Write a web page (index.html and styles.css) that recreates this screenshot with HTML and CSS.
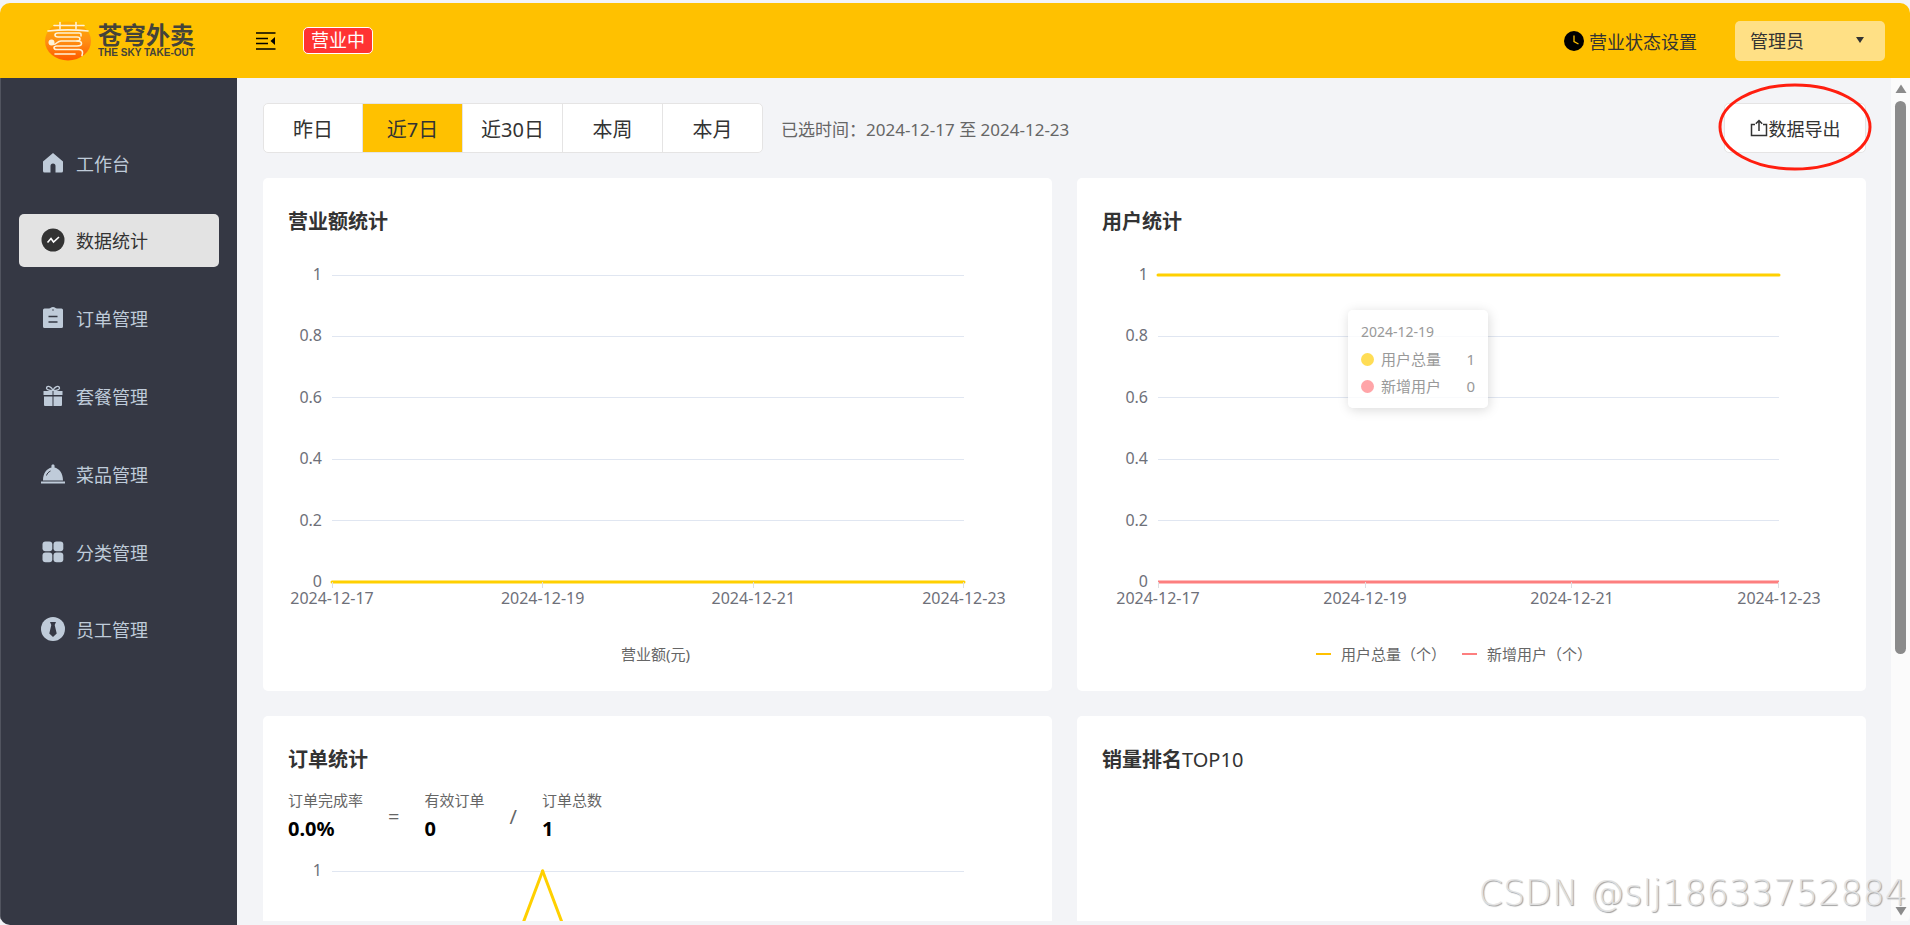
FILE: index.html
```
<!DOCTYPE html>
<html lang="zh-CN">
<head>
    <meta charset="UTF-8">
    <meta name="viewport" content="width=device-width, initial-scale=1.0">
    <title>苍穹外卖</title>
    <link rel="stylesheet" href="styles.css">
</head>
<body>
    <div class="app">
        <header class="navbar">
            <a class="logo" href="#">
                <svg class="logo-mark" viewBox="0 0 46 40">
                    <defs>
                        <linearGradient id="sun" x1="0" y1="0" x2="0" y2="1">
                            <stop offset="0" stop-color="#ffb000"/>
                            <stop offset="0.5" stop-color="#ff8f12"/>
                            <stop offset="1" stop-color="#ff5a00"/>
                        </linearGradient>
                    </defs>
                    <ellipse cx="23" cy="20" rx="23" ry="19.500" fill="url(#sun)"/>
                    <g fill="none" stroke="#fff3d6" stroke-width="1.600" stroke-linecap="round" stroke-linejoin="round">
                        <path d="M9 4.500h30M15 1.500v6M31 1.500v6M3 10c13-1.500 27-1.500 40 0"/>
                        <path d="M36 15V13.500c0-1-1-1.500-2-1.500H13c-4 0-4 4 0 4h19c4 0 4 4 0 4H16c-4 0-4 3.500-8 3.500"/>
                        <path d="M32 20c6 0 6 5 0 5H12c-4 0-4 3.500 0 3.500h22c4 0 4 3.500 3 6M10 33h20"/>
                    </g>
                    <circle cx="6.500" cy="21.500" r="3" fill="#fff3d6"/>
                </svg>
                <span class="logo-text">
                    <span class="logo-cn">苍穹外卖</span>
                    <span class="logo-en">THE SKY TAKE-OUT</span>
                </span>
            </a>
            <button class="icon-btn" type="button" aria-label="收起菜单">
                <svg width="20" height="18" viewBox="0 0 20 18">
                    <path d="M0 1h19.500M0 6.500h12M0 11.500h12M0 17h19.500" stroke="#000" stroke-width="1.600"/>
                    <path d="M19 5v8l-4.500-4z" fill="#000"/>
                </svg>
            </button>
            <span class="status">营业中</span>
            <div class="navbar-right">
                <button class="status-btn" type="button">
                    <svg width="20" height="20" viewBox="0 0 20 20">
                        <circle cx="10" cy="10" r="10" fill="#000"/>
                        <path d="M10 4.500v6l4.500 2.500" fill="none" stroke="#ffc100" stroke-width="1.300"/>
                    </svg>
                    营业状态设置
                </button>
                <div class="user">
                    <select class="user-select" aria-label="账号">
                        <option>管理员</option>
                    </select>
                    <svg class="user-caret" width="8" height="6" viewBox="0 0 8 6"><path d="M0 0h8L4 6z" fill="#333"/></svg>
                </div>
            </div>
        </header>

        <div class="body">
            <div class="sidebar">
                <nav class="menu">
                    <a class="menu-item" href="#">
                        <svg viewBox="0 0 24 24"><path d="M12 2 22 10.500V20a1.500 1.500 0 0 1-1.500 1.500h-6V15a2.500 2.500 0 0 0-5 0v6.500h-6A1.500 1.500 0 0 1 2 20v-9.500z"/></svg>
                        工作台
                    </a>
                    <a class="menu-item active" href="#">
                        <svg viewBox="0 0 24 24"><circle cx="12" cy="12" r="11.500"/><path class="stroke" d="m6.500 14.500 3.500-4 2.500 3.500 5.500-5"/></svg>
                        数据统计
                    </a>
                    <a class="menu-item" href="#">
                        <svg viewBox="0 0 24 24"><path d="M8 2.500c1.500 0 2-1.500 4-1.500s2.500 1.500 4 1.500h4.500A1.500 1.500 0 0 1 22 4v16.500a1.500 1.500 0 0 1-1.500 1.500h-17A1.500 1.500 0 0 1 2 20.500V4a1.500 1.500 0 0 1 1.500-1.500z"/><path class="stroke" d="M7.500 10.500h9M7.500 16h9M11.500 4h1"/></svg>
                        订单管理
                    </a>
                    <a class="menu-item" href="#">
                        <svg viewBox="0 0 24 24"><path d="M2.500 7h19v4h-19zM3 12.500h8.500V22H4a1 1 0 0 1-1-1zM12.500 12.500H21V21a1 1 0 0 1-1 1h-7.500z"/><path class="bow" d="M12 7C9 6.500 5.500 6 5.500 4.200 5.500 1 11 2 12 7c1-5 6.500-6 6.500-2.800C18.500 6 15 6.500 12 7z"/><path class="cut" d="M12 7v4"/></svg>
                        套餐管理
                    </a>
                    <a class="menu-item" href="#">
                        <svg viewBox="0 0 24 24"><path d="M0 19.500h24v2H0zM2 18.500C2 11 6 6.500 10.500 5.500 10 3 11 2.500 12 2.500s2 .5 1.500 3C18 6.500 22 11 22 18.500z"/><path class="cut" d="M5.500 13.500c.5-2 2-3.500 4-4.500"/></svg>
                        菜品管理
                    </a>
                    <a class="menu-item" href="#">
                        <svg viewBox="0 0 24 24"><rect x="1.500" y="1.500" width="9.800" height="9.800" rx="3"/><rect x="12.500" y="1.500" width="9.800" height="9.800" rx="3"/><rect x="1.500" y="12.500" width="9.800" height="9.800" rx="3"/><rect x="12.500" y="12.500" width="9.800" height="9.800" rx="3"/></svg>
                        分类管理
                    </a>
                    <a class="menu-item" href="#">
                        <svg viewBox="0 0 24 24"><circle cx="12" cy="12" r="12"/><path class="tie" d="M9 5h6l-1.300 3 2 8.500L12 20l-3.700-3.500 2-8.500z"/></svg>
                        员工管理
                    </a>
                </nav>
            </div>

            <main class="main">
                <div class="toolbar">
                    <div class="tabs">
                        <button class="tab" type="button">昨日</button>
                        <button class="tab active" type="button">近7日</button>
                        <button class="tab" type="button">近30日</button>
                        <button class="tab" type="button">本周</button>
                        <button class="tab" type="button">本月</button>
                    </div>
                    <span class="range">已选时间：2024-12-17 至 2024-12-23</span>
                    <div class="export">
                        <button class="export-btn" type="button">
                            <svg width="18" height="18" viewBox="0 0 18 18" fill="none" stroke="#333" stroke-width="1.500">
                                <path d="M5 5.500H1.500V16.500h15V5.500H13M9 12V2M5.800 4.800 9 1.500l3.200 3.300"/>
                            </svg>
                            数据导出
                        </button>
                        <svg class="export-mark" viewBox="0 0 154 88"><ellipse cx="77" cy="44" rx="75" ry="42" fill="none" stroke="#ff1e0f" stroke-width="3"/></svg>
                    </div>
                </div>

                <div class="cards">
                    <section class="card">
                        <h2>营业额统计</h2>
                        <div class="chart">
                            <ul class="y-axis"><li>1</li><li>0.8</li><li>0.6</li><li>0.4</li><li>0.2</li><li>0</li></ul>
                            <div class="plot">
                                <svg class="lines">
                                    <g class="grid">
                                        <line x2="100%"/>
                                        <line x2="100%" y1="20%" y2="20%"/>
                                        <line x2="100%" y1="40%" y2="40%"/>
                                        <line x2="100%" y1="60%" y2="60%"/>
                                        <line x2="100%" y1="80%" y2="80%"/>
                                    </g>
                                    <line class="yellow" x2="100%" y1="100%" y2="100%"/>
                                </svg>
                                <div class="ticks"><i></i><i></i><i></i><i></i></div>
                            </div>
                            <ul class="x-axis"><li>2024-12-17</li><li>2024-12-19</li><li>2024-12-21</li><li>2024-12-23</li></ul>
                        </div>
                        <div class="legend">营业额(元)</div>
                    </section>

                    <section class="card">
                        <h2>用户统计</h2>
                        <div class="chart chart-user">
                            <ul class="y-axis"><li>1</li><li>0.8</li><li>0.6</li><li>0.4</li><li>0.2</li><li>0</li></ul>
                            <div class="plot">
                                <svg class="lines">
                                    <g class="grid">
                                        <line x2="100%" y1="20%" y2="20%"/>
                                        <line x2="100%" y1="40%" y2="40%"/>
                                        <line x2="100%" y1="60%" y2="60%"/>
                                        <line x2="100%" y1="80%" y2="80%"/>
                                    </g>
                                    <line class="yellow" x2="100%"/>
                                    <line class="red" x2="100%" y1="100%" y2="100%"/>
                                </svg>
                                <div class="ticks"><i></i><i></i><i></i><i></i></div>
                                <div class="tooltip">
                                    <div class="tooltip-date">2024-12-19</div>
                                    <div class="tooltip-row"><i class="dot dot-yellow"></i>用户总量<span>1</span></div>
                                    <div class="tooltip-row"><i class="dot dot-red"></i>新增用户<span>0</span></div>
                                </div>
                            </div>
                            <ul class="x-axis"><li>2024-12-17</li><li>2024-12-19</li><li>2024-12-21</li><li>2024-12-23</li></ul>
                        </div>
                        <div class="legend legend-user">
                            <span class="legend-item">用户总量（个）</span>
                            <span class="legend-item legend-red">新增用户（个）</span>
                        </div>
                    </section>

                    <section class="card">
                        <h2>订单统计</h2>
                        <div class="order-stats">
                            <div><p>订单完成率</p><strong>0.0%</strong></div>
                            <span>=</span>
                            <div><p>有效订单</p><strong>0</strong></div>
                            <span>/</span>
                            <div><p>订单总数</p><strong>1</strong></div>
                        </div>
                        <div class="chart chart-order">
                            <ul class="y-axis"><li>1</li></ul>
                            <div class="plot">
                                <svg class="lines">
                                    <g class="grid"><line x2="100%"/></g>
                                    <line class="yellow" x1="16.67%" y1="100%" x2="33.33%"/>
                                    <line class="yellow" x1="33.33%" x2="50%" y2="100%"/>
                                </svg>
                            </div>
                        </div>
                    </section>

                    <section class="card">
                        <h2>销量排名<span>TOP10</span></h2>
                    </section>
                </div>
            </main>

            <div class="scrollbar">
                <svg width="12" height="10" viewBox="0 0 12 10"><path d="M6 0.500 11.500 9H.5z"/></svg>
                <div class="thumb"></div>
                <svg width="12" height="10" viewBox="0 0 12 10"><path d="M6 9.500 11.500 1H.5z"/></svg>
            </div>
        </div>
    </div>
    <div class="watermark">CSDN @slj18633752884</div>
</body>
</html>
```
FILE: styles.css
```
* {
    box-sizing: border-box;
}
body {
    margin: 0;
    padding-top: 3px;
    height: 100vh;
    overflow: hidden;
    background: #f3f4f7;
    color: #333;
    font-family: "Noto Sans", "Noto Sans CJK SC", sans-serif;
    font-size: 18px;
}
h2, p, ul {
    margin: 0;
    padding: 0;
}
ul {
    list-style: none;
}
a {
    color: inherit;
    text-decoration: none;
}
button, select {
    font: inherit;
    color: inherit;
    border: none;
    background: none;
    padding: 0;
    cursor: pointer;
}
.app {
    display: flex;
    flex-direction: column;
    height: 100%;
    border-radius: 10px;
    overflow: hidden;
}

/* top bar */
.navbar {
    display: flex;
    align-items: center;
    flex: none;
    height: 75px;
    padding: 0 25px 0 45px;
    background: #ffc100;
}
.logo {
    display: flex;
    align-items: center;
    gap: 7px;
    width: 211px;
    color: #44433a;
}
.logo-mark {
    width: 46px;
    height: 40px;
}
.logo-text {
    display: flex;
    flex-direction: column;
    white-space: nowrap;
}
.logo-cn {
    font-size: 24px;
    font-weight: 700;
    line-height: 24px;
}
.logo-en {
    font-family: "Liberation Sans", sans-serif;
    font-size: 10px;
    font-weight: 700;
    line-height: 12px;
}
.icon-btn {
    display: flex;
}
.status {
    margin-left: 27px;
    padding: 0 7px;
    border: 1px solid #fff;
    border-radius: 5px;
    background: #f33;
    color: #fff;
    line-height: 25px;
}
.navbar-right {
    display: flex;
    align-items: center;
    gap: 38px;
    margin-left: auto;
}
.status-btn {
    display: flex;
    align-items: center;
    gap: 5px;
}
.user {
    position: relative;
}
.user-select {
    appearance: none;
    width: 150px;
    height: 40px;
    padding: 0 15px;
    border-radius: 5px;
    background: #ffe085;
}
.user-caret {
    position: absolute;
    top: 16px;
    right: 21px;
    pointer-events: none;
}

/* left menu */
.body {
    display: flex;
    flex: 1;
    min-height: 0;
}
.sidebar {
    flex: none;
    width: 237px;
    padding: 58px 18px 0 18px;
    border-left: 1px solid #51545f;
    background: #353844;
    color: #bfcbd9;
}
.menu {
    display: flex;
    flex-direction: column;
    justify-content: space-between;
    height: 520px;
}
.menu-item {
    display: flex;
    align-items: center;
    gap: 11px;
    height: 53px;
    padding-left: 22px;
    border-radius: 5px;
}
.menu-item svg {
    width: 24px;
    height: 24px;
    fill: #bfcbd9;
}
.menu-item.active {
    background: #e3e3e3;
    color: #333;
}
.menu-item.active svg {
    fill: #333;
}
.menu-item .stroke {
    fill: none;
    stroke: #353844;
    stroke-width: 1.6;
}
.menu-item.active .stroke {
    stroke: #fff;
}
.menu-item .bow {
    fill: none;
    stroke: #bfcbd9;
    stroke-width: 1.3;
}
.menu-item .cut {
    fill: none;
    stroke: #353844;
}
.menu-item .tie {
    fill: #353844;
}

/* content */
.main {
    flex: 1;
    min-width: 0;
    margin-bottom: 4px;
    padding: 25px 25px 0 26px;
    overflow: hidden;
}
.toolbar {
    display: flex;
    align-items: center;
    gap: 18px;
    margin-bottom: 25px;
}
.tabs {
    display: flex;
    height: 50px;
    border: 1px solid #e5e4e4;
    border-radius: 5px;
    background: #fff;
    overflow: hidden;
}
.tab {
    width: 100px;
    border-right: 1px solid #e5e4e4;
    font-size: 20px;
}
.tab:first-child,
.tab:last-child {
    width: 99px;
}
.tab:last-child {
    border-right: none;
}
.tab.active {
    background: #ffc100;
}
.range {
    color: #666;
    font-size: 17px;
}
.export {
    position: relative;
    margin-left: auto;
}
.export-btn {
    display: flex;
    align-items: center;
    justify-content: center;
    gap: 1px;
    width: 142px;
    height: 50px;
    border: 1px solid #e5e4e4;
    border-radius: 5px;
    background: #fff;
}
.export-mark {
    position: absolute;
    top: -20px;
    left: -6px;
    width: 154px;
    height: 88px;
    pointer-events: none;
}
.cards {
    display: grid;
    grid-template-columns: 1fr 1fr;
    gap: 25px;
}
.card {
    min-width: 0;
    padding: 28px 25px 27px;
    border-radius: 5px;
    background: #fff;
}
.card h2 {
    font-size: 20px;
    line-height: 32px;
}
.card h2 span {
    font-weight: 400;
}

/* charts */
.chart {
    display: grid;
    grid-template-columns: 44px 1fr;
    margin-top: 28px;
    padding-right: 63px;
    color: #6e7079;
    font-size: 16px;
    line-height: 16px;
}
.chart-user {
    grid-template-columns: 56px 1fr;
    padding-right: 62px;
}
.y-axis {
    display: flex;
    flex-direction: column;
    justify-content: space-between;
    padding-right: 10px;
    text-align: right;
}
.plot {
    position: relative;
    height: 307px;
    margin: 9px 0 7px;
}
.lines {
    display: block;
    width: 100%;
    height: 100%;
    overflow: visible;
}
.grid {
    stroke: #e0e6f1;
    stroke-width: 1;
    shape-rendering: crispEdges;
}
.yellow {
    stroke: #ffd000;
    stroke-width: 3;
    stroke-linecap: round;
}
.red {
    stroke: #fd7f7f;
    stroke-width: 3;
}
.ticks {
    display: flex;
    justify-content: space-between;
    height: 6px;
}
.ticks i {
    width: 1px;
    background: #dcdee2;
}
.x-axis {
    grid-column: 2;
    display: flex;
    justify-content: space-between;
    margin: 1px -50px 0;
}
.x-axis li {
    width: 100px;
    text-align: center;
}
.legend {
    display: flex;
    justify-content: center;
    gap: 16px;
    margin-top: 38px;
    padding-right: 4px;
    color: #666;
    font-size: 15px;
    line-height: 20px;
}
.legend-user {
    padding-right: 35px;
}
.legend-item {
    display: flex;
    align-items: center;
    gap: 10px;
}
.legend-item::before {
    content: "";
    width: 15px;
    height: 2px;
    background: #ffc100;
}
.legend-red::before {
    background: #fd7f7f;
}
.tooltip {
    position: absolute;
    top: 35px;
    left: 30.6%;
    width: 140px;
    padding: 13px;
    border-radius: 5px;
    background: rgba(255, 255, 255, 0.8);
    box-shadow: 1px 2px 12px rgba(0, 0, 0, 0.15);
    color: #999;
    font-size: 15px;
    line-height: 18px;
}
.tooltip-date {
    font-size: 14px;
}
.tooltip-row {
    display: flex;
    align-items: center;
    margin-top: 9px;
}
.tooltip-row span {
    margin-left: auto;
}
.dot {
    width: 13px;
    height: 13px;
    margin-right: 7px;
    border-radius: 50%;
}
.dot-yellow {
    background: #ffdd55;
}
.dot-red {
    background: #ffa5a8;
}

/* order numbers */
.order-stats {
    display: flex;
    align-items: center;
    gap: 25px;
    margin-top: 14px;
    color: #666;
    font-size: 20px;
}
.order-stats p {
    font-size: 15px;
    line-height: 20px;
}
.order-stats strong {
    display: block;
    margin-top: 5px;
    color: #000;
    line-height: 28px;
}
.chart-order {
    margin-top: 19px;
}
.chart-order .plot {
    height: 280px;
}

.scrollbar {
    display: flex;
    flex-direction: column;
    align-items: center;
    flex: none;
    width: 19px;
    margin-bottom: 4px;
    padding: 6px 0 5px;
    background: #fbfbfb;
}
.scrollbar svg {
    fill: #8b8b8b;
}
.thumb {
    width: 11px;
    height: calc(66% + 4px);
    margin: 7px 0 auto;
    border-radius: 6px;
    background: #8b8b8b;
}
.watermark {
    position: absolute;
    right: 3px;
    bottom: 10px;
    color: rgba(228, 228, 228, 0.9);
    font-family: "DejaVu Sans", sans-serif;
    font-size: 35px;
    font-weight: 200;
    line-height: 44px;
    text-shadow: 1px 1px 1px #a0a0a0;
}
```
